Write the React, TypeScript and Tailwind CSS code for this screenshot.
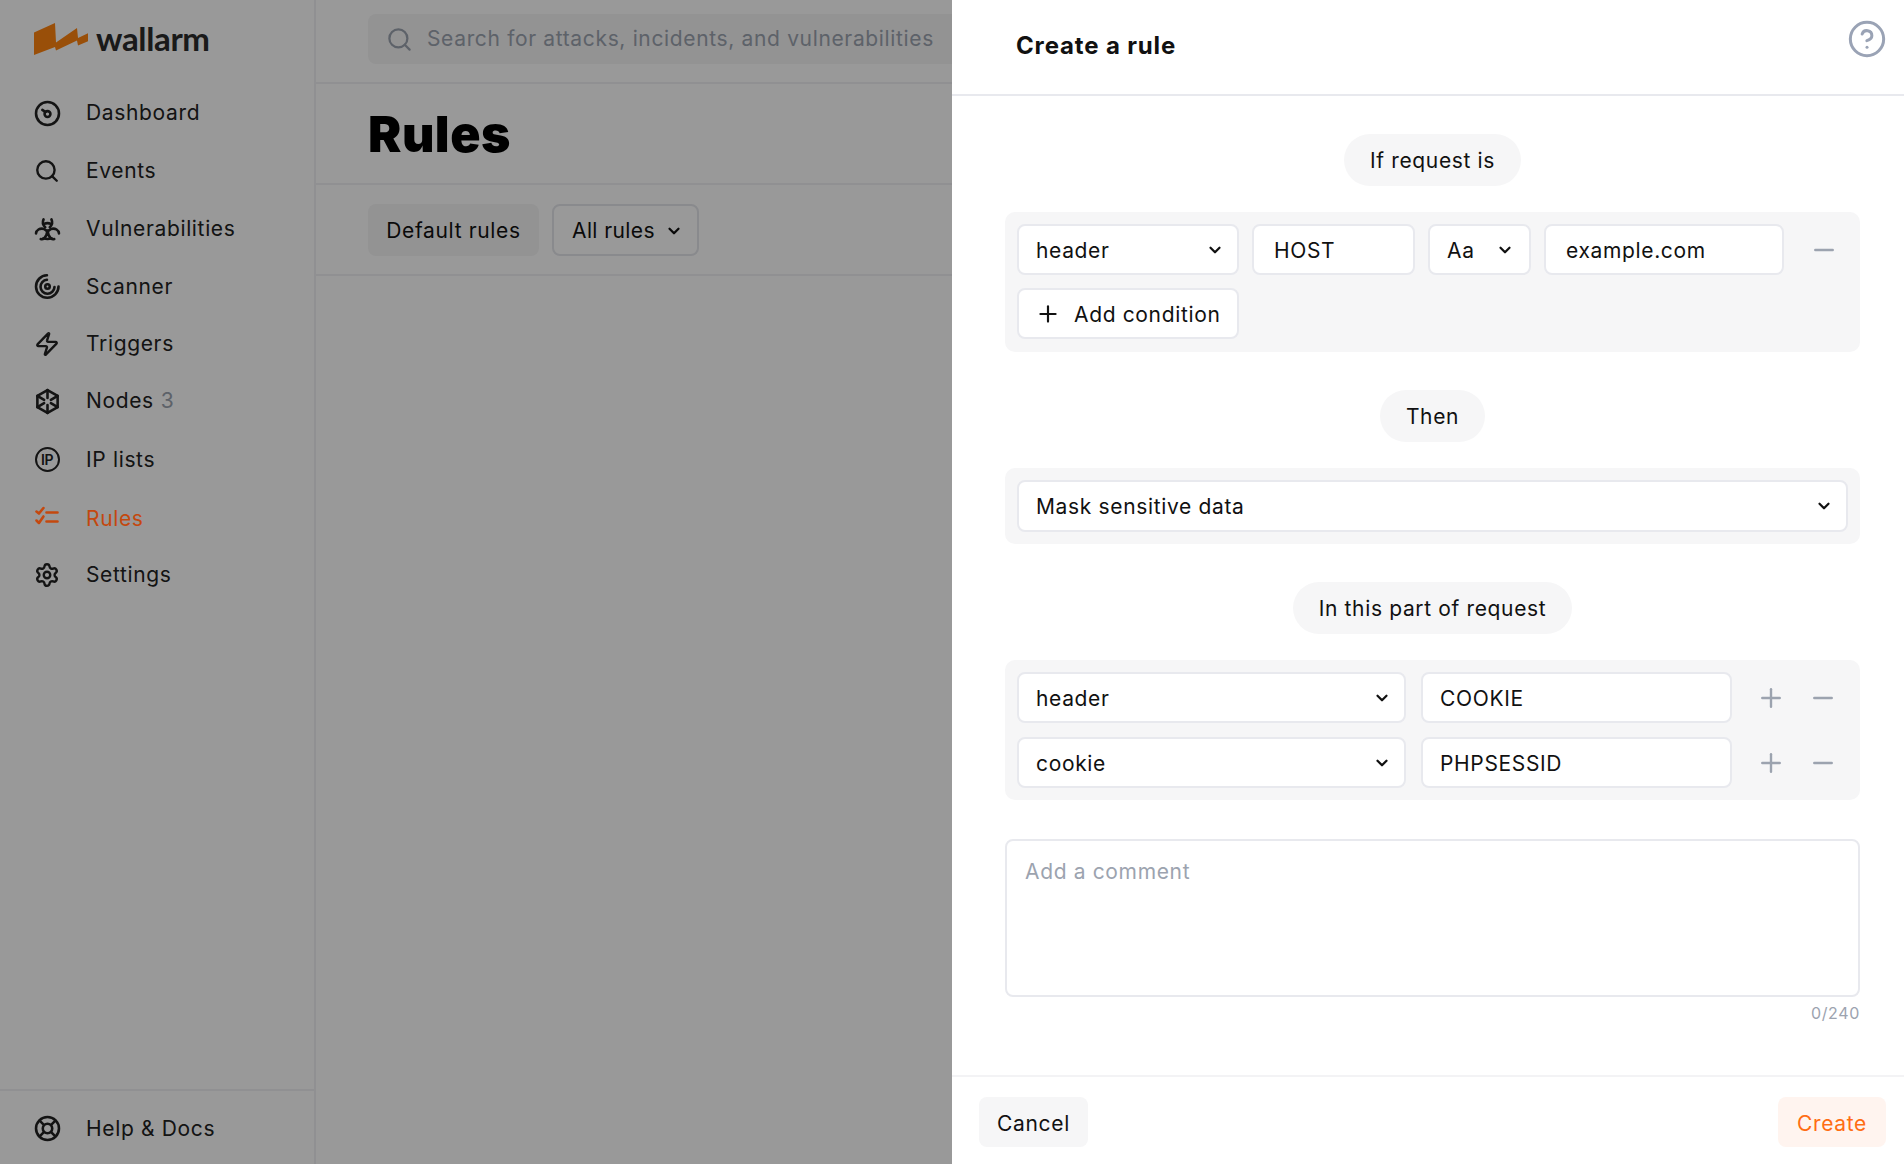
import { ChevronDown, CircleHelp, Minus, Plus, Search, Settings, Zap } from 'lucide-react';
import type { ReactNode } from 'react';

function IconBase({ children }: { children: ReactNode }) {
  return (
    <svg
      aria-hidden="true"
      className="h-[27px] w-[27px]"
      fill="none"
      stroke="currentColor"
      strokeLinecap="round"
      strokeLinejoin="round"
      strokeWidth="2.3"
      viewBox="0 0 24 24"
    >
      {children}
    </svg>
  );
}

function DashboardIcon() {
  return (
    <IconBase>
      <circle cx="12" cy="12" r="10.2" />
      <circle cx="12" cy="12.500" r="2.6" />
      <path d="M10 10.600 7.400 8.800" />
    </IconBase>
  );
}

function BiohazardIcon() {
  return (
    <IconBase>
      <path d="M8.500 3c-1.200 2.600-.7 5 1.500 7" />
      <path d="M15.500 3c1.200 2.600.7 5-1.500 7" />
      <path d="M9 7c2-.9 4-.9 6 0" />
      <path d="M1.800 15.500C2 12.500 5 10.500 9 11.500l2 1.500" />
      <path d="M22.200 15.500C22 12.500 19 10.500 15 11.500l-2 1.500" />
      <path d="M6 20.500c1.500.5 3.500-.5 5-3.500l1-4 1 4c1.500 3 3.500 4 5 3.500" />
      <path d="M8.500 19.800c2.300.8 4.700.8 7 0" />
    </IconBase>
  );
}

function ScannerIcon() {
  return (
    <IconBase>
      <path d="M11.500 2A10 10 0 1 0 21.800 12" />
      <path d="M11.500 6A6.200 6.200 0 1 0 18.200 12.500" />
      <circle cx="12" cy="12" r="2" />
    </IconBase>
  );
}

function NodesIcon() {
  return (
    <IconBase>
      <path d="M12 1.800 21 7v10l-9 5.200L3 17V7z" />
      <path d="M12 1.800v7M12 15.200v7M3 7l6 3.500M21 7l-6 3.500M3 17l6-3.500M21 17l-6-3.500" />
    </IconBase>
  );
}

function RulesIcon() {
  return (
    <IconBase>
      <path d="M2.200 5.800 4.400 7.600l4-4.900" />
      <path d="M2.200 13.800 4.400 16l4-5.800" />
      <path d="M11.100 6.700h9.800M11.100 14.700h9.800" />
    </IconBase>
  );
}

function HelpDocsIcon() {
  return (
    <IconBase>
      <circle cx="12" cy="12" r="10.200" />
      <circle cx="12" cy="12" r="4.200" />
      <path d="m5 5 4 4M19 5l-4 4M5 19l4-4M19 19l-4-4" />
    </IconBase>
  );
}

function IpIcon() {
  return (
    <span className="flex h-[25px] w-[25px] items-center justify-center rounded-full border-[2.5px] border-[#222] text-[14px] leading-none font-semibold tracking-[-0.5px] text-[#222]">
      IP
    </span>
  );
}

function WallarmMark() {
  return (
    <svg aria-hidden="true" className="h-[32px] w-[54px]" viewBox="0 0 54 32">
      <path
        d="M0 32V9.500L21 0l1 19.500L43 5l1 10 10.500-5v8L44 22.500 43 17.500 22 27.500 21 24z"
        fill="#ff8410"
      />
    </svg>
  );
}

const navItems: { label: string; icon: ReactNode; height: string; badge?: string; active?: boolean }[] = [
  { label: 'Dashboard', icon: <DashboardIcon />, height: 'h-[58px]' },
  { label: 'Events', icon: <Search size={26} strokeWidth={2.2} />, height: 'h-[58px]' },
  { label: 'Vulnerabilities', icon: <BiohazardIcon />, height: 'h-[58px]' },
  { label: 'Scanner', icon: <ScannerIcon />, height: 'h-[57px]' },
  { label: 'Triggers', icon: <Zap size={26} strokeWidth={2.2} />, height: 'h-[57px]' },
  { label: 'Nodes', icon: <NodesIcon />, height: 'h-[58px]', badge: '3' },
  { label: 'IP lists', icon: <IpIcon />, height: 'h-[59px]' },
  { label: 'Rules', icon: <RulesIcon />, height: 'h-[59px]', active: true },
  { label: 'Settings', icon: <Settings size={26} strokeWidth={2.2} />, height: 'h-[53px]' },
];

function NavRow({ label, icon, height, badge, active }: { label: string; icon: ReactNode; height: string; badge?: string; active?: boolean }) {
  return (
    <div className={`flex items-center ${height} ${active ? 'relative z-10 text-[#c4480e]' : 'text-[#222]'}`}>
      <span className="ml-[33px] flex w-[28px] items-center justify-center">{icon}</span>
      <span className="ml-[25px]">{label}</span>
      {badge && <span className="ml-[7px] text-[#9ca3af]">{badge}</span>}
    </div>
  );
}

function Sidebar() {
  return (
    <aside className="flex h-full w-[316px] shrink-0 flex-col border-r-2 border-[#f0f0f3]">
      <div className="flex h-[84px] items-start pt-[23px] pl-[34px]">
        <WallarmMark />
        <span className="-mt-[3px] ml-[8px] font-[family-name:Lato,sans-serif] text-[33px] leading-[36px] font-bold tracking-[-0.35px] text-[#2c2c2c]">
          wallarm
        </span>
      </div>
      <nav className="flex flex-col">
        {navItems.map((item) => (
          <NavRow key={item.label} {...item} />
        ))}
      </nav>
      <div className="mt-auto flex h-[75px] items-center border-t-2 border-[#f0f0f3] pt-[2px]">
        <NavRow height="h-[58px]" icon={<HelpDocsIcon />} label="Help & Docs" />
      </div>
    </aside>
  );
}

function MainContent() {
  return (
    <main className="flex min-w-0 flex-1 flex-col">
      <div className="flex h-[84px] items-start border-b-2 border-[#f0f0f3] pt-[14px] pl-[52px]">
        <div className="flex h-[50px] w-full items-center rounded-lg bg-[#f5f5f6] pl-[18px] text-[#9ca3af]">
          <Search size={27} strokeWidth={2} />
          <span className="ml-[14px] whitespace-nowrap">Search for attacks, incidents, and vulnerabilities</span>
        </div>
      </div>
      <div className="flex h-[101px] items-center border-b-2 border-[#f0f0f3] pl-[52px]">
        <h1 className="text-[50px] leading-none font-black tracking-[0.5px] text-black">Rules</h1>
      </div>
      <div className="flex h-[91px] items-center gap-[13px] border-b-2 border-[#f0f0f3] pl-[52px] text-[#111]">
        <div className="flex h-[52px] w-[171px] items-center justify-center rounded-lg bg-[#f5f5f6] pt-[3px]">Default rules</div>
        <div className="flex h-[52px] w-[147px] items-center rounded-lg border-2 border-[#e5e6eb] pt-[2px] pl-[18px]">
          <span className="tracking-[0.4px]">All rules</span>
          <ChevronDown className="ml-[10px]" size={18} strokeWidth={3} />
        </div>
      </div>
    </main>
  );
}

function Pill({ children }: { children: ReactNode }) {
  return (
    <div className="flex h-[52px] items-center self-center rounded-[26px] bg-[#f6f6f7] px-[26px] pt-[2px] text-[#111]">
      {children}
    </div>
  );
}

function Group({ children, className }: { children: ReactNode; className: string }) {
  return <div className={`flex flex-col rounded-[10px] bg-[#f6f6f7] ${className}`}>{children}</div>;
}

function SelectField({ value, className }: { value: string; className: string }) {
  return (
    <div className={`flex shrink-0 items-center justify-between rounded-lg border-2 border-[#e8e9ee] bg-white pl-[17px] text-[#111] ${className}`}>
      <span className="pt-[2px]">{value}</span>
      <ChevronDown size={18} strokeWidth={3} />
    </div>
  );
}

function TextField({ value, className }: { value: string; className: string }) {
  return (
    <div className={`flex h-[51px] shrink-0 items-center rounded-lg border-2 border-[#e8e9ee] bg-white pt-[2px] text-[#111] ${className}`}>
      {value}
    </div>
  );
}

function RowAction({ kind }: { kind: 'plus' | 'minus' }) {
  const Icon = kind === 'plus' ? Plus : Minus;
  return (
    <span className="flex w-[30px] shrink-0 items-center justify-center text-[#9ca3af]">
      <Icon size={30} strokeWidth={1.9} />
    </span>
  );
}

function RequestRow({ selectValue, inputValue }: { selectValue: string; inputValue: string }) {
  return (
    <div className="flex items-center gap-[15px]">
      <SelectField className="h-[51px] w-[389px] pr-[13px]" value={selectValue} />
      <TextField className="w-[311px] pl-[17px]" value={inputValue} />
      <div className="ml-[9px] flex gap-[22px]">
        <RowAction kind="plus" />
        <RowAction kind="minus" />
      </div>
    </div>
  );
}

function RulePanel() {
  return (
    <section className="absolute inset-y-0 right-0 z-20 flex w-[952px] flex-col bg-white">
      <header className="flex h-[96px] shrink-0 items-start justify-between border-b-2 border-[#e8e9ee] pt-[28px] pr-[17px] pl-[64px]">
        <h2 className="text-[24px] leading-[36px] font-bold tracking-[0.85px] text-[#111]">Create a rule</h2>
        <CircleHelp className="-mt-[9px] text-[#9aa3b5]" size={40} strokeWidth={1.8} />
      </header>
      <div className="flex flex-1 flex-col pt-[38px] pr-[44px] pl-[53px]">
        <Pill>If request is</Pill>
        <div className="mt-[26px]">
          <Group className="gap-[13px] px-[12px] pt-[12px] pb-[13px]">
            <div className="flex items-center gap-[13px]">
              <SelectField className="h-[51px] w-[222px] pr-[13px]" value="header" />
              <TextField className="w-[163px] pl-[20px]" value="HOST" />
              <SelectField className="h-[51px] w-[103px] pr-[15px]" value="Aa" />
              <TextField className="w-[240px] pl-[20px]" value="example.com" />
              <span className="ml-[12px]"><RowAction kind="minus" /></span>
            </div>
            <div className="flex h-[51px] w-[222px] items-center rounded-lg border-2 border-[#e8e9ee] bg-white pl-[16px] text-[#111]">
              <Plus size={26} strokeWidth={2} />
              <span className="ml-[13px] pt-[2px]">Add condition</span>
            </div>
          </Group>
        </div>
        <div className="mt-[38px] flex flex-col">
          <Pill>Then</Pill>
        </div>
        <div className="mt-[26px]">
          <Group className="p-[12px]">
            <SelectField className="h-[52px] w-full pr-[13px]" value="Mask sensitive data" />
          </Group>
        </div>
        <div className="mt-[38px] flex flex-col">
          <Pill>In this part of request</Pill>
        </div>
        <div className="mt-[26px]">
          <Group className="gap-[14px] p-[12px]">
            <RequestRow inputValue="COOKIE" selectValue="header" />
            <RequestRow inputValue="PHPSESSID" selectValue="cookie" />
          </Group>
        </div>
        <div className="mt-[39px] h-[158px] rounded-lg border-2 border-[#e8e9ee] px-[18px] pt-[15px] leading-[32px] text-[#9ca3af]">
          Add a comment
        </div>
        <div className="mt-[6px] text-right text-[16px] leading-[20px] text-[#9ca3af]">0/240</div>
      </div>
      <footer className="flex h-[89px] shrink-0 items-start justify-between border-t-2 border-[#f3f3f5] pt-[20px] pr-[18px] pl-[27px]">
        <button className="h-[50px] w-[109px] rounded-lg bg-[#f6f6f7] pt-[4px] text-[#111]" type="button">Cancel</button>
        <button className="h-[50px] w-[108px] rounded-lg bg-[#fff4ef] pt-[4px] text-[#ff6d13]" type="button">Create</button>
      </footer>
    </section>
  );
}

export default function App() {
  return (
    <div className="relative flex h-screen overflow-hidden bg-white font-[family-name:Inter,sans-serif] text-[21px] tracking-[0.65px]">
      <Sidebar />
      <MainContent />
      <div className="absolute inset-0 bg-black/40" />
      <RulePanel />
    </div>
  );
}
